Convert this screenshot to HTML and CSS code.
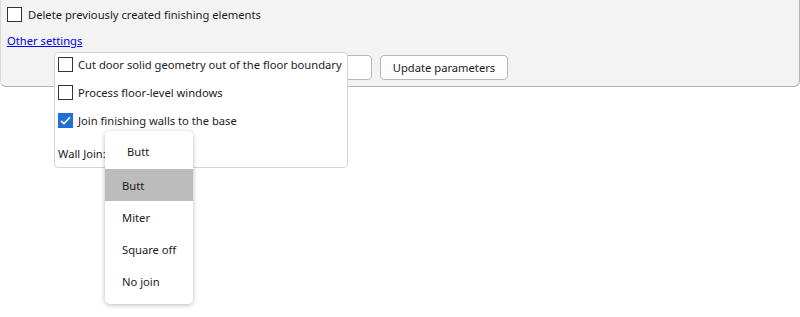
FILE: index.html
```html
<!DOCTYPE html>
<html>

<head>
  <meta charset="UTF-8">
  <title>Finishing settings</title>
  <link rel="stylesheet" href="styles.css">
</head>

<body>
  <div class="panel">
    <label class="check-row">
      <span class="box"></span>
      <span>Delete previously created finishing elements</span>
    </label>
    <div class="link-row">
      <a href="#" class="link">Other settings</a>
    </div>
    <div class="action-row">
      <div class="textbox"></div>
      <button class="btn">Update parameters</button>
    </div>
  </div>

  <div class="popup">
    <label class="popup-row">
      <span class="box"></span>
      <span>Cut door solid geometry out of the floor boundary</span>
    </label>
    <label class="popup-row">
      <span class="box"></span>
      <span>Process floor-level windows</span>
    </label>
    <label class="popup-row">
      <span class="box checked">
        <svg width="13" height="13" viewBox="0 0 13 13"><path d="M2 6.8 L5 9.6 L11 3.2" fill="none" stroke="#fff" stroke-width="1.6"/></svg>
      </span>
      <span>Join finishing walls to the base</span>
    </label>
    <div class="popup-row">
      <span>Wall Join:</span>
    </div>
  </div>

  <div class="dropdown">
    <div class="dropdown-head">Butt</div>
    <div class="dropdown-item selected">Butt</div>
    <div class="dropdown-item">Miter</div>
    <div class="dropdown-item">Square off</div>
    <div class="dropdown-item">No join</div>
  </div>
</body>

</html>
```

FILE: styles.css
```css
body {
  margin: 0;
  font-family: "Noto Sans", "Open Sans", sans-serif;
  font-size: 11.2px;
  color: #1b1b1b;
  background: #fff;
}

.panel {
  height: 87px;
  box-sizing: border-box;
  background: #f3f3f3;
  border: 1px solid #b4b4b4;
  border-top: none;
  border-left-color: #dadada;
  border-radius: 0 0 6px 6px;
  padding: 7px 0 0 6px;
}

.box {
  display: inline-flex;
  align-items: center;
  justify-content: center;
  width: 13px;
  height: 13px;
  border: 1px solid #333;
  background: #fff;
  flex-shrink: 0;
}

.box.checked {
  background: #1f6fd4;
  border-color: #1f6fd4;
}

.check-row {
  display: flex;
  align-items: center;
  gap: 6px;
  height: 15px;
}

.link-row {
  margin-top: 11px;
  height: 16px;
}

.link {
  color: #0000ee;
  text-decoration: underline;
}

.action-row {
  display: flex;
  gap: 8px;
  margin-top: 6px;
  padding-left: 245px;
}

.textbox {
  width: 118px;
  height: 23px;
  border: 1px solid #b8b8b8;
  border-radius: 4px;
  background: #fff;
}

.btn {
  height: 25px;
  width: 128px;
  font-family: inherit;
  font-size: 11.2px;
  color: #1b1b1b;
  background: #fdfdfd;
  border: 1px solid #b8b8b8;
  border-radius: 4px;
}

.popup {
  position: absolute;
  left: 54px;
  top: 52px;
  width: 289px;
  height: 114px;
  background: #fff;
  border: 1px solid #d4d4d4;
  border-radius: 4px;
  padding: 0 0 0 3px;
}

.popup-row {
  display: flex;
  align-items: center;
  gap: 5px;
  height: 28px;
  white-space: nowrap;
}

.popup-row:first-child {
  margin-top: -3px;
}

.popup-row:last-child {
  height: 38px;
}

.dropdown {
  position: absolute;
  left: 105px;
  top: 131px;
  width: 88px;
  height: 173px;
  background: #fff;
  border-radius: 5px;
  box-shadow: 0 1px 5px rgba(0, 0, 0, 0.28);
}

.dropdown-head {
  height: 38px;
  line-height: 41px;
  padding-left: 22px;
}

.dropdown-item {
  height: 32px;
  line-height: 33px;
  padding-left: 17px;
}

.dropdown-item.selected {
  background: #bcbcbc;
}
```
